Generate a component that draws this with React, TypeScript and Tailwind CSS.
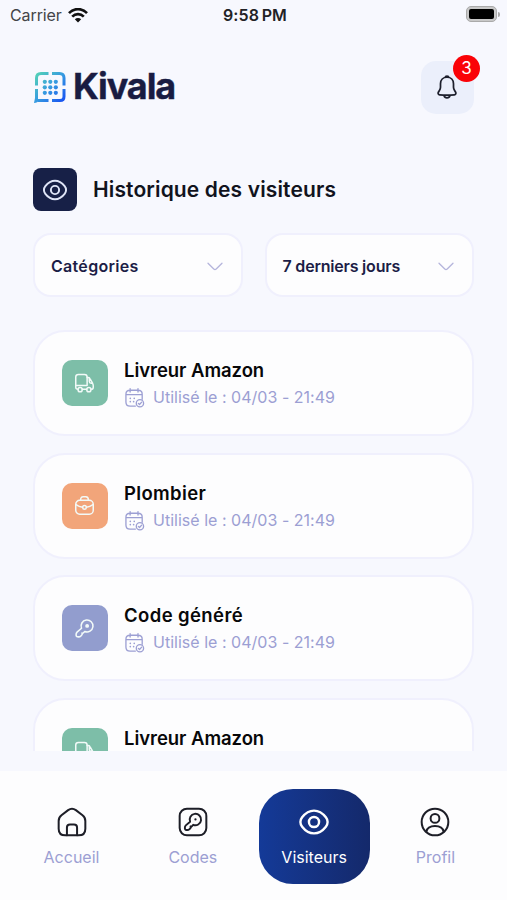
import type { ReactNode } from "react";
import clsx from "clsx";

type IconProps = { className?: string };

function Stroke({ className, children, width = 1.5 }: IconProps & { children: ReactNode; width?: number }) {
  return (
    <svg
      viewBox="0 0 24 24"
      fill="none"
      stroke="currentColor"
      strokeWidth={width}
      strokeLinecap="round"
      strokeLinejoin="round"
      className={clsx("shrink-0", className)}
    >
      {children}
    </svg>
  );
}

function EyeIcon({ className }: IconProps) {
  return (
    <Stroke className={className} width={1.8}>
      <path d="M1.800 12c0-1.700.5-2.500 1.300-3.500C4.900 6.200 8 3.500 12 3.500s7.100 2.700 8.900 5c.8 1 1.300 1.800 1.300 3.500s-.5 2.500-1.300 3.500c-1.800 2.300-4.900 5-8.900 5s-7.100-2.700-8.900-5c-.8-1-1.300-1.800-1.300-3.500Z" />
      <circle cx="12" cy="12" r="3.800" />
    </Stroke>
  );
}

function TruckIcon({ className }: IconProps) {
  return (
    <Stroke className={className} width={1.700}>
      <g transform="translate(0 -.8)">
        <path d="M4.500 19.500C3 19.500 2 18.500 2 17V5.500c0-2 1-3 3-3h7c2 0 3 1 3 3V15H2" />
        <path d="M9.500 19.500h5M15 6h1c1 0 1.800.4 2.200 1.200l3 5.300c.5 1 .8 1.800.8 3V17c0 1.500-1 2.500-2.500 2.500M17.500 7v3.500c0 1.200.7 2 2 2h1.500" />
        <circle cx="7" cy="19.800" r="2.400" />
        <circle cx="17" cy="19.800" r="2.400" />
      </g>
    </Stroke>
  );
}

function BriefcaseIcon({ className }: IconProps) {
  return (
    <Stroke className={className} width={1.700}>
      <rect x="2" y="6" width="20" height="16" rx="4.500" />
      <path d="M7.500 6c0-2.800 1-4 3-4h3c2 0 3 1.200 3 4M2.300 11c2.300 1.700 4.800 2.700 7.500 3M21.700 11c-2.300 1.700-4.800 2.700-7.500 3" />
      <circle cx="12" cy="14.200" r="2.100" />
    </Stroke>
  );
}

const keyPath =
  "M8.600 11.700A6.800 6.800 0 1 1 12.300 15.400L10.600 17.200c-.5.500-1.300.2-1.500 0 .6.800.5 1.600-.2 2.300l-1 1c-.8.800-1.700 1.200-2.900 1.100l-1.200-.1c-.8-.1-1.200-.5-1.300-1.300l-.1-1.200c-.1-1.200.3-2.100 1.100-2.900Z";

function KeyIcon({ className }: IconProps) {
  return (
    <Stroke className={className} width={1.800}>
      <path d={keyPath} />
      <circle cx="15" cy="9" r="1.300" fill="currentColor" />
    </Stroke>
  );
}

function CalendarIcon({ className }: IconProps) {
  return (
    <Stroke className={className} width={1.500}>
      <path d="M7 1.800v4M16 1.800v4M2.200 8.800h18.600M13 21.800H7c-3.200 0-4.800-1.800-4.800-4.800V8.200c0-3 1.600-4.500 4.800-4.500h9c3.200 0 4.800 1.500 4.800 4.500V14" />
      <path d="M7.200 13h.01M11.700 13h.01M7.200 16.800h.01M11 16.800h.01" strokeWidth="1.900" />
      <circle cx="18.200" cy="18.600" r="4.200" />
      <path d="m16.400 18.700 1.300 1.300 2.500-2.700" />
    </Stroke>
  );
}

function BellIcon({ className }: IconProps) {
  return (
    <Stroke className={className} width={1.600}>
      <path d="M12 3c-3.700 0-6 2.600-6 6v3.200c0 1-.4 2-1 3l-1 1.700c-.6 1 0 2.200 1.200 2.300 4.500.5 9.100.5 13.600 0 1.200-.1 1.800-1.300 1.200-2.300l-1-1.700c-.6-1-1-2-1-3V9c0-3.400-2.300-6-6-6ZM10.300 3.100c.2-1.600 3.200-1.600 3.400 0M9.300 20.100c.7 2.500 4.700 2.500 5.400 0" />
    </Stroke>
  );
}

function HomeIcon({ className }: IconProps) {
  return (
    <Stroke className={className}>
      <path d="M2 11.200c0-2.100.6-3 2.100-4.200l5-3.900C11.200 1.500 12.800 1.500 14.900 3.100l5 3.900C21.400 8.200 22 9.100 22 11.200V17c0 3.400-1.600 5-5 5H7c-3.400 0-5-1.600-5-5Z" />
      <path d="M8.200 22v-5.800c0-1.500.8-2.300 2.300-2.300h3c1.500 0 2.300.8 2.300 2.300V22" />
    </Stroke>
  );
}

function CodesIcon({ className }: IconProps) {
  return (
    <Stroke className={className}>
      <rect x="2" y="2" width="20" height="20" rx="5.500" />
      <g transform="translate(4.400 4.400) scale(.63)">
        <path d={keyPath} strokeWidth="2.300" />
        <circle cx="15" cy="9" r=".7" strokeWidth="1.300" />
      </g>
    </Stroke>
  );
}

function ProfileIcon({ className }: IconProps) {
  return (
    <Stroke className={className}>
      <circle cx="12" cy="12" r="10" />
      <circle cx="12" cy="9.300" r="3.300" />
      <path d="M5.500 19.300c.5-2.700 3.200-4.300 6.500-4.300s6 1.600 6.500 4.300" />
    </Stroke>
  );
}

function ChevronIcon() {
  return (
    <svg viewBox="0 0 16 9" fill="none" stroke="#b5b5dc" strokeWidth="1.300" strokeLinecap="round" strokeLinejoin="round" className="h-[9px] w-4">
      <path d="M1 1.200 6.800 7q1.200 1 2.400 0L15 1.200" />
    </svg>
  );
}

function LogoMark() {
  const dots = [10.800, 16.300, 21.800];
  return (
    <svg viewBox="0 0 32 32" fill="none" className="-mt-px h-8 w-8">
      <defs>
        <linearGradient id="mark" x1="2" y1="2" x2="30" y2="30" gradientUnits="userSpaceOnUse">
          <stop stopColor="#55d3b6" />
          <stop offset=".5" stopColor="#369be0" />
          <stop offset="1" stopColor="#1752f2" />
        </linearGradient>
      </defs>
      <g stroke="url(#mark)" strokeWidth="3">
        <path d="M2.500 14.500V7q0-4.500 4.500-4.500h7.500M18 2.500h7.500q4.500 0 4.500 4.500v7.500M30 18v7.500q0 4-4 4h-8M14.500 29.500H4M2.500 30V18" />
      </g>
      <path d="M1 27 0 32c2.500 0 4-1 5-2.500Z" fill="url(#mark)" />
      <g fill="url(#mark)">
        {dots.map((y) => dots.map((x) => <circle key={`${x}-${y}`} cx={x} cy={y} r="2.100" />))}
      </g>
    </svg>
  );
}

function StatusBar() {
  return (
    <div className="grid h-[30px] grid-cols-3 items-center pr-[7px] pl-[10px]">
      <div className="flex items-center gap-[6px]">
        <span className="text-[16px] tracking-[-0.1px] text-[#444448]">Carrier</span>
        <svg viewBox="0 0 20 15" className="h-[15px] w-5" fill="none" stroke="#111" strokeWidth="2.600">
          <path d="M1 5.200C6-.3 14-.3 19 5.200M4.200 8.700C7.500 5.200 12.500 5.200 15.800 8.700" />
          <path d="M10 14.500 6.800 11.300c1.800-1.700 4.600-1.700 6.400 0Z" fill="#111" stroke="none" />
        </svg>
      </div>
      <span className="text-center text-[16px] font-semibold tracking-[0.1px] text-[#222226] [word-spacing:-1.500px]">9:58 PM</span>
      <div className="-mt-[2px] flex items-center justify-end gap-px">
        <span className="block h-4 w-[31px] rounded-[5px] border border-[#aaa] bg-[#c8c8c8] p-[2px]">
          <span className="block h-full w-full rounded-[2px] bg-black" />
        </span>
        <span className="h-[5px] w-[2px] rounded-r bg-[#aaa]" />
      </div>
    </div>
  );
}

function Select({ label, className }: { label: string; className: string }) {
  return (
    <button className="flex h-16 flex-1 items-center justify-between rounded-[18px] border-2 border-[#f0f0fd] bg-[#fdfdfe] pt-[2px] pr-[18px] pl-4">
      <span className={clsx("text-[16px] font-semibold text-[#1c1d46]", className)}>{label}</span>
      <ChevronIcon />
    </button>
  );
}

const visits = [
  { title: "Livreur Amazon", Icon: TruckIcon, color: "bg-[#7dbea8]", tracking: "tracking-[-0.05px]" },
  { title: "Plombier", Icon: BriefcaseIcon, color: "bg-[#f2a57a]", tracking: "tracking-[0.35px]" },
  { title: "Code généré", Icon: KeyIcon, color: "bg-[#929dce]", tracking: "tracking-[0.4px]" },
  { title: "Livreur Amazon", Icon: TruckIcon, color: "bg-[#7dbea8]", tracking: "tracking-[-0.05px]" },
];

const tabs = [
  { label: "Accueil", Icon: HomeIcon, active: false },
  { label: "Codes", Icon: CodesIcon, active: false },
  { label: "Visiteurs", Icon: EyeIcon, active: true },
  { label: "Profil", Icon: ProfileIcon, active: false },
];

export default function App() {
  return (
    <div className="flex h-[900px] w-[507px] flex-col overflow-hidden bg-[#f7f8fe] font-['Inter','Liberation_Sans',sans-serif]">
      <StatusBar />

      <header className="mt-[30px] flex h-[54px] items-center justify-between px-[33px]">
        <div className="flex items-center gap-[7px] pl-px">
          <LogoMark />
          <span className="-mt-[2px] text-[36px] leading-none font-bold tracking-[-1.100px] text-[#191c42] [-webkit-text-stroke:0.4px_#191c42]">
            Kivala
          </span>
        </div>
        <button className="relative grid h-[53px] w-[53px] place-items-center rounded-[15px] bg-[#ebeffb] text-[#1d1f2c]">
          <BellIcon className="mr-px h-[26px] w-[26px]" />
          <span className="absolute -top-[6px] -right-[6px] grid h-[27px] w-[27px] place-items-center rounded-full bg-[#fa0207] pt-px text-[17px] text-white">
            3
          </span>
        </button>
      </header>

      <div className="mt-[54px] flex items-center gap-4 px-[33px]">
        <span className="grid h-[43px] w-[44px] place-items-center rounded-[8px] bg-[#172047] text-[#dfe5f8]">
          <EyeIcon className="mr-px h-[26px] w-[26px]" />
        </span>
        <h1 className="pt-px text-[21px] font-semibold tracking-[0.13px] text-[#11131d]">Historique des visiteurs</h1>
      </div>

      <div className="mt-[22px] flex gap-[22px] px-[33px]">
        <Select label="Catégories" className="tracking-[0.3px]" />
        <Select label="7 derniers jours" className="tracking-[-0.2px]" />
      </div>

      <main className="mt-[33px] flex h-[421px] shrink-0 flex-col gap-[16.700px] overflow-hidden px-[33px]">
        {visits.map(({ title, Icon, color, tracking }, i) => (
          <article key={i} className="flex h-[106px] shrink-0 items-center rounded-[32px] border-2 border-[#f0f0fd] bg-[#fdfdfe] pl-[27px]">
            <span className={clsx("grid h-[46px] w-[46px] place-items-center rounded-[10px] text-[#f2faf8]", color)}>
              <Icon className="mr-px h-[21px] w-[21px]" />
            </span>
            <div className="ml-4 pt-[2px]">
              <h2 className={clsx("text-[18.500px] leading-[27px] font-semibold text-[#080809]", tracking)}>{title}</h2>
              <p className="flex items-center gap-2 text-[16px] leading-[27px] tracking-[0.02px] text-[#9c9fd3]">
                <CalendarIcon className="h-[21px] w-[21px]" />
                Utilisé le : 04/03 - 21:49
              </p>
            </div>
          </article>
        ))}
      </main>

      <nav className="mt-auto flex h-[129px] shrink-0 items-start justify-between bg-[#fdfdfe] px-[16px] pt-[18px]">
        {tabs.map(({ label, Icon, active }) => (
          <button
            key={label}
            className={clsx(
              "flex h-[95px] w-[111px] flex-col items-center rounded-[34px] pt-[17px] text-[16px]",
              active ? "bg-linear-to-r from-[#143a98] to-[#14296b] text-white" : "text-[#9c9fd3]"
            )}
          >
            <Icon className={clsx("h-8 w-8", !active && "text-[#1d1e27]")} />
            <span className="mt-[7px] leading-6">{label}</span>
          </button>
        ))}
      </nav>
    </div>
  );
}
